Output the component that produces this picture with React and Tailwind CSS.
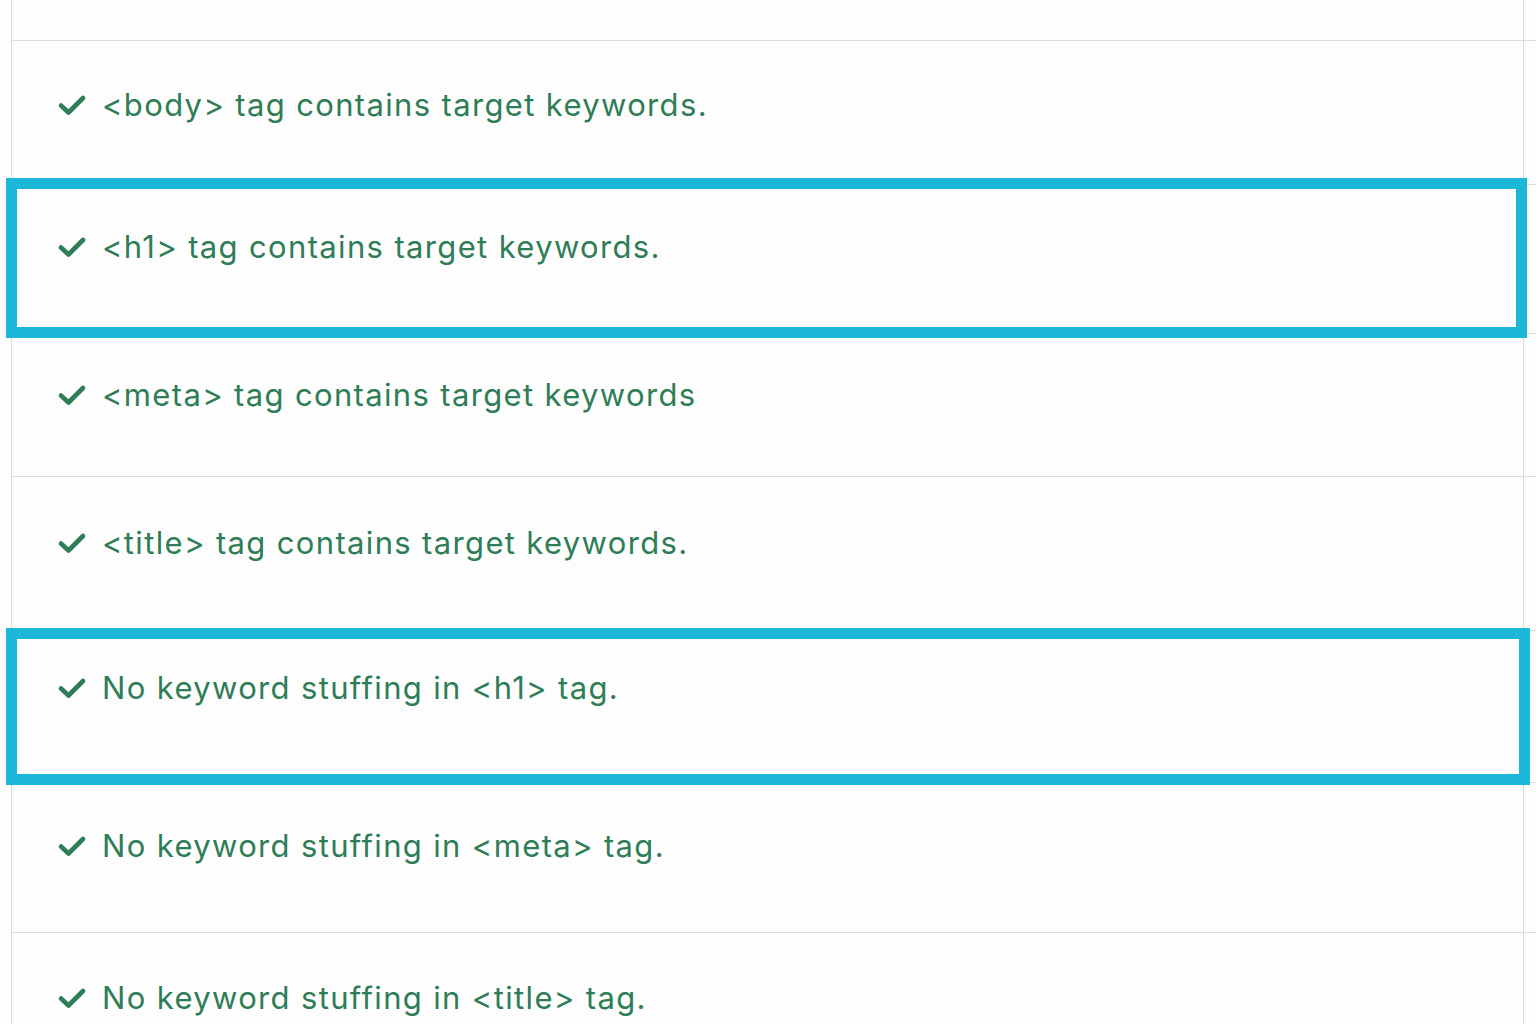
import React from 'react';

const rows = [
  { text: '', h: 'h-[41px]' },
  { text: '<body> tag contains target keywords.', h: 'h-[144px]', pt: 'pt-[46px]' },
  { text: '<h1> tag contains target keywords.', h: 'h-[149px]', pt: 'pt-[44px]' },
  { text: '<meta> tag contains target keywords', h: 'h-[143px]', pt: 'pt-[43px]' },
  { text: '<title> tag contains target keywords.', h: 'h-[154px]', pt: 'pt-[48px]' },
  { text: 'No keyword stuffing in <h1> tag.', h: 'h-[152px]', pt: 'pt-[39px]' },
  { text: 'No keyword stuffing in <meta> tag.', h: 'h-[150px]', pt: 'pt-[45px]' },
  { text: 'No keyword stuffing in <title> tag.', h: 'h-[120px]', pt: 'pt-[47px]' },
];

const CheckMark = () => (
  <svg width="30" height="22" viewBox="0 0 30 22" fill="none" className="shrink-0">
    <path
      d="M4 11.5 L11.5 18.5 L26 4"
      stroke="#2e7d57"
      strokeWidth="4.6"
      strokeLinecap="round"
      strokeLinejoin="round"
    />
  </svg>
);

export default function App() {
  return (
    <div className="relative w-[1536px] h-[1024px] overflow-hidden bg-[#fdfdfd] font-['Inter',sans-serif]">
      <div className="pl-[11px]">
        <div className="border-l border-[#dcdcdc]">
          {rows.map((row, i) => (
            <div key={i} className={`flex border-b border-[#dcdcdc] ${row.h}`}>
              <div className={`w-[1512px] border-r border-[#dcdcdc] pl-[45px] ${row.pt || ''}`}>
                {row.text && (
                  <div className="flex items-center gap-[15px] text-[31px] leading-[36px] tracking-[1.35px] text-[#2e7d57]">
                    <CheckMark />
                    <span>{row.text}</span>
                  </div>
                )}
              </div>
              <div className="flex-1" />
            </div>
          ))}
        </div>
      </div>

      {/* highlight boxes */}
      <div className="absolute left-[6px] top-[178px] w-[1521px] h-[160px] border-[11px] border-[#1db8d8]" />
      <div className="absolute left-[6px] top-[628px] w-[1524px] h-[157px] border-[11px] border-[#1db8d8]" />
    </div>
  );
}
